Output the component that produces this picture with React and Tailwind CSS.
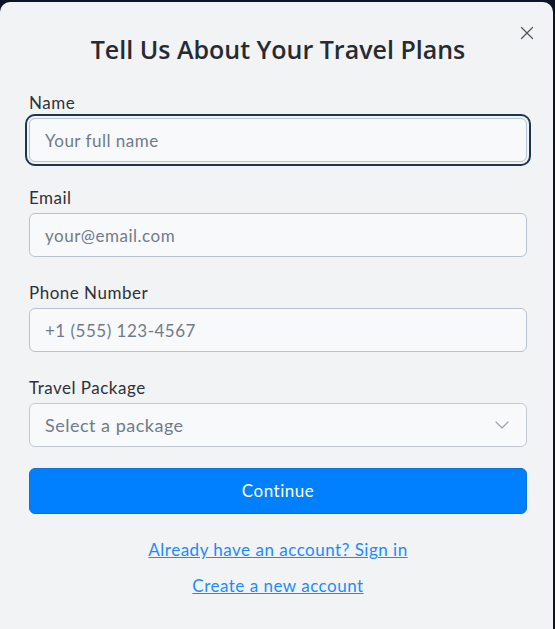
import { X, ChevronDown } from 'lucide-react';

const fields = [
  { label: 'Name', placeholder: 'Your full name', type: 'text', focused: true },
  { label: 'Email', placeholder: 'your@email.com', type: 'email' },
  { label: 'Phone Number', placeholder: '+1 (555) 123-4567', type: 'tel' },
];

export default function App() {
  return (
    <div className="h-[629px] w-[555px] overflow-hidden bg-[#0d1424] pt-[2px] font-['Lato',sans-serif] tracking-[0.5px]">
      <div className="relative h-[640px] w-[553px] rounded-[10px] bg-[#f2f3f5] px-[29px] pt-[29px] pr-[26px]">
        <button className="absolute right-[15px] top-[20px] text-[#55595f]">
          <X size={22} strokeWidth={1.4} />
        </button>

        <h2 className="text-center text-[25px] leading-9 font-semibold text-[#262b33] font-['Open_Sans',sans-serif] tracking-[0px]">
          Tell Us About Your Travel Plans
        </h2>

        <form className="mt-6 flex flex-col gap-6">
          {fields.map((f) => (
            <div key={f.label}>
              <label className="block text-[17px] leading-6 text-[#2d3139]">{f.label}</label>
              <input
                type={f.type}
                placeholder={f.placeholder}
                className={`mt-[3px] block h-[44px] w-full rounded-[6px] border border-[#b9c2cf] bg-[#f8f9fa] px-[15px] text-[17px] tracking-[0.5px] text-[#2d3139] placeholder:text-[#6f7b8d] outline-none ${
                  f.focused ? 'ring-2 ring-[#1d3650] ring-offset-2 ring-offset-[#f2f3f5]' : ''
                }`}
              />
            </div>
          ))}

          <div>
            <label className="block text-[17px] leading-6 text-[#2d3139]">Travel Package</label>
            <div className="mt-[3px] flex h-[44px] w-full items-center justify-between rounded-[6px] border border-[#c3c9d2] bg-[#f8f9fa] pl-[15px] pr-[12px]">
              <span className="text-[18px] text-[#6f7b8d]">Select a package</span>
              <ChevronDown size={24} strokeWidth={1.1} className="text-[#9aa2ad]" />
            </div>
          </div>
        </form>

        <button className="mt-[21px] h-[46px] w-full rounded-[6px] border border-[#0a73e0] bg-[#0080ff] text-[17px] text-white">
          Continue
        </button>

        <div className="mt-6 flex flex-col items-center gap-3 text-[17px] leading-6 text-[#1a8cff]">
          <a href="#" className="underline">Already have an account? Sign in</a>
          <a href="#" className="underline">Create a new account</a>
        </div>
      </div>
    </div>
  );
}
